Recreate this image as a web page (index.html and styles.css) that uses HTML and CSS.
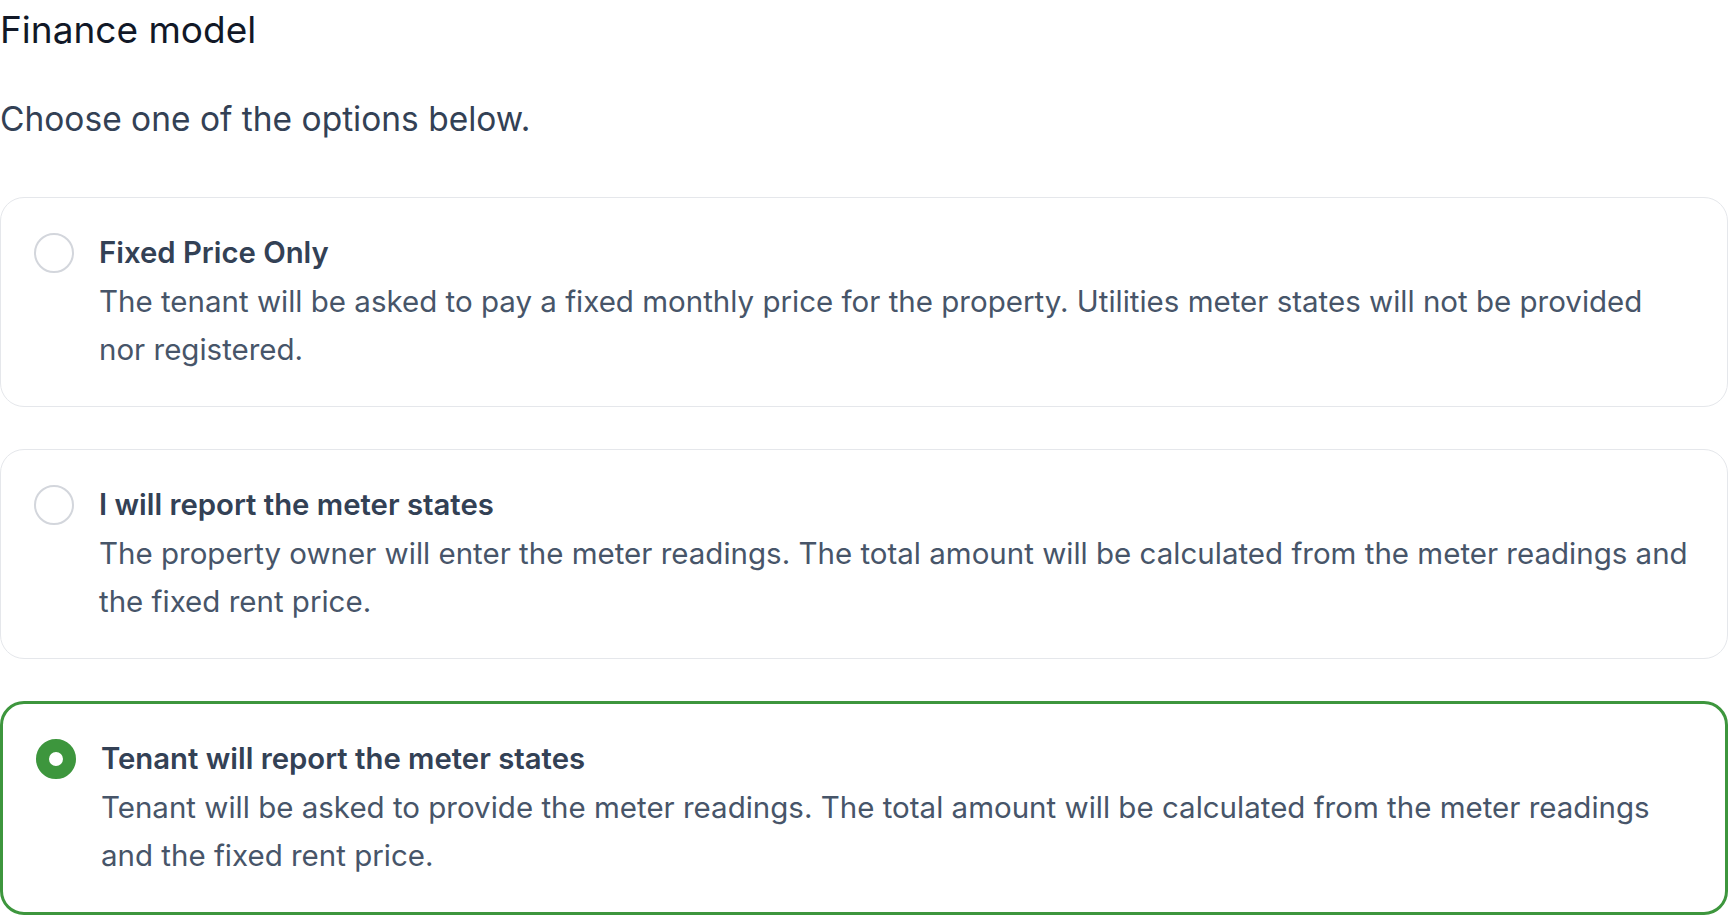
FILE: index.html
```html
<!DOCTYPE html>
<html lang="en">
<head>
<meta charset="utf-8">
<title>Finance model</title>
<link rel="stylesheet" href="styles.css">
</head>
<body>
<main class="finance">
  <h1 class="finance-title">Finance model</h1>
  <p class="finance-intro">Choose one of the options below.</p>
  <div class="options">
    <label class="option">
      <input type="radio" name="model" class="option-input">
      <span class="radio"></span>
      <span class="option-body">
        <span class="option-name">Fixed Price Only</span>
        <span class="option-desc">The tenant will be asked to pay a fixed monthly price for the property. Utilities meter states will not be provided nor registered.</span>
      </span>
    </label>
    <label class="option">
      <input type="radio" name="model" class="option-input">
      <span class="radio"></span>
      <span class="option-body">
        <span class="option-name">I will report the meter states</span>
        <span class="option-desc">The property owner will enter the meter readings. The total amount will be calculated from the meter readings and the fixed rent price.</span>
      </span>
    </label>
    <label class="option option-selected">
      <input type="radio" name="model" class="option-input" checked>
      <span class="radio"></span>
      <span class="option-body">
        <span class="option-name">Tenant will report the meter states</span>
        <span class="option-desc">Tenant will be asked to provide the meter readings. The total amount will be calculated from the meter readings and the fixed rent price.</span>
      </span>
    </label>
  </div>
</main>
</body>
</html>
```
FILE: styles.css
```css
* { box-sizing: border-box; }

body {
  margin: 0;
  background: #ffffff;
  font-family: Inter, "Noto Sans", "Liberation Sans", sans-serif;
}

.finance {
  display: flex;
  flex-direction: column;
}

.finance-title {
  margin: 0;
  font-size: 37px;
  line-height: 60px;
  font-weight: 400;
  color: #111827;
}

.finance-intro {
  margin: 35px 0 0;
  font-size: 33.5px;
  line-height: 48px;
  font-weight: 400;
  color: #334155;
}

.options {
  margin-top: 54px;
  display: flex;
  flex-direction: column;
  gap: 42px;
}

.option {
  display: flex;
  align-items: flex-start;
  gap: 25px;
  padding: 31px 32px 33px 33px;
  border: 1px solid #e5e7eb;
  border-radius: 24px;
  background: #ffffff;
  cursor: pointer;
}

.option-selected {
  border: 3px solid #3d963d;
}

.option-input {
  position: absolute;
  opacity: 0;
  width: 0;
  height: 0;
  margin: 0;
}

.radio {
  flex: none;
  width: 40px;
  height: 40px;
  margin-top: 4px;
  border: 2px solid #d3d6dc;
  border-radius: 50%;
  background: #ffffff;
}

.option-selected .radio {
  border: 13px solid #3d963d;
  background: #ffffff;
}

.option-body {
  flex: 1;
  display: flex;
  flex-direction: column;
  min-width: 0;
}

.option-name {
  font-size: 29.3px;
  line-height: 48px;
  font-weight: 600;
  color: #334155;
}

.option-desc {
  font-size: 29.5px;
  line-height: 48px;
  font-weight: 400;
  color: #475569;
}
```
